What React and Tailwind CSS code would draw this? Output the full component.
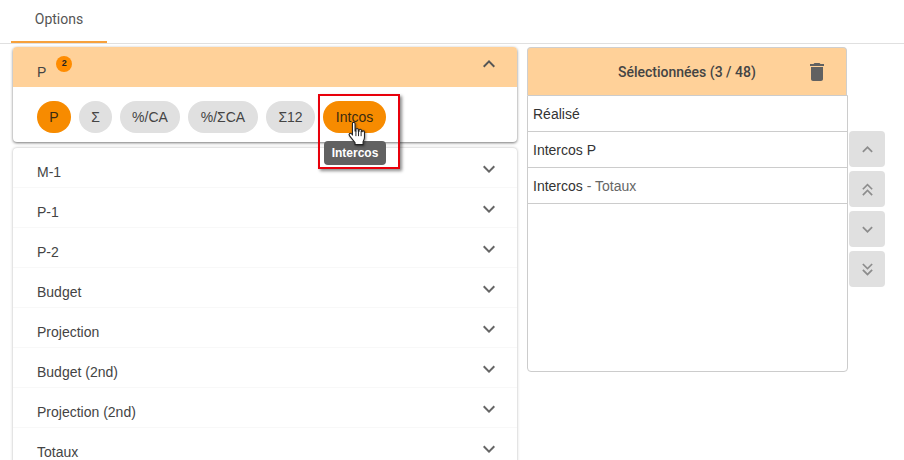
import React from "react";
import { MdDelete, MdExpandLess, MdExpandMore, MdKeyboardArrowUp, MdKeyboardArrowDown, MdKeyboardDoubleArrowUp, MdKeyboardDoubleArrowDown } from "react-icons/md";

const chips = [
  { label: "P", on: true, w: "w-[34px]" },
  { label: "Σ", w: "w-[33px]" },
  { label: "%/CA", w: "w-[60px]" },
  { label: "%/ΣCA", w: "w-[70px]" },
  { label: "Σ12", w: "w-[49px]" },
  { label: "Intcos", on: true, w: "w-[63px]" },
];

const rows = ["M-1", "P-1", "P-2", "Budget", "Projection", "Budget (2nd)", "Projection (2nd)", "Totaux"];

const Row = ({ label }) => (
  <div className="flex h-10 shrink-0 items-center justify-between border-b border-[#f8f8f8] pl-6 pr-4">
    <span className="pt-[8px] text-sm text-[#444]">{label}</span>
    <MdExpandMore size={24} className="mt-[2px] text-[#666]" />
  </div>
);

const SideButton = ({ children }) => (
  <div className="flex size-9 items-center justify-center rounded bg-[#e0e0e0] text-[#8c8c8c]">
    {children}
  </div>
);

const Hand = () => (
  <svg width="20" height="26" viewBox="0 0 18 24" className="absolute left-[347px] top-[121px] drop-shadow-[1px_1px_1px_rgba(0,0,0,0.4)]">
    <path
      d="M5 1.5c1 -.6 2.2 0 2.2 1.2v6.5l.8 0v-1.2c0-1.4 2.1-1.4 2.2 0v1.3l.7.1v-.8c0-1.4 2.1-1.4 2.2 0v1.2l.6.1c.2-1.2 2.2-1 2.2.4v4.7c0 2-.8 3.2-1.3 4.2v2.6H7.2v-1.8L2 13.5c-1-1.2.6-2.8 1.8-1.8l1 1V2.7c0-.5 0-1 .2-1.2z"
      fill="#fff"
      stroke="#222"
      strokeWidth="1"
    />
    <path d="M8 9v5M10.4 9v5M12.8 9.5V14" stroke="#222" strokeWidth=".9" fill="none" />
  </svg>
);

export default function App() {
  return (
    <div className="relative h-[460px] w-[904px] overflow-hidden bg-white font-['Liberation_Sans',Arial,sans-serif] text-sm text-[#333]">
      {/* tabs */}
      <div className="h-11 border-b border-[#e0e0e0] pl-[11px]">
        <div className="flex h-[43px] w-24 items-start justify-center border-b-2 border-[#f7a13c] pt-[9px] font-['Roboto',sans-serif] text-sm text-[#555]">
          Options
        </div>
      </div>

      <div className="flex h-[416px] items-start pl-[13px] pt-[3px]">
        {/* left accordion */}
        <div className="flex h-[413px] w-[504px] shrink-0 flex-col gap-[6px]">
          <div className="h-[95px] shrink-0 rounded bg-white shadow-[0_1px_3px_rgba(0,0,0,0.55)]">
            <div className="flex h-10 items-center justify-between rounded-t bg-[#ffd199] pl-6 pr-4">
              <div className="flex items-start">
                <span className="mt-[9px] text-sm text-[#444]">P</span>
                <span className="ml-[10px] mt-[3px] flex size-4 items-center justify-center rounded-full bg-[#ff8c00] text-[9px] font-bold text-[#222]">
                  2
                </span>
              </div>
              <MdExpandLess size={24} className="-mt-[6px] text-[#555]" />
            </div>
            <div className="flex gap-2 pl-6 pt-[14px]">
              {chips.map((c) => (
                <div
                  key={c.label}
                  className={`flex h-8 items-center justify-center rounded-full text-sm ${c.w} ${c.on ? "bg-[#f78b00] text-[#3a2a10]" : "bg-[#e0e0e0] text-[#444]"}`}
                >
                  {c.label}
                </div>
              ))}
            </div>
          </div>
          <div className="flex flex-col rounded-t bg-white shadow-[0_0_3px_rgba(0,0,0,0.3)]">
            {rows.map((r) => (
              <Row key={r} label={r} />
            ))}
          </div>
        </div>

        {/* selected list */}
        <div className="ml-[10px] flex w-[321px] shrink-0 flex-col">
          <div className="flex h-[48px] w-[320px] items-center justify-between rounded-t border border-b-0 border-[#cfcfcf] bg-[#ffd199] pl-[90px] pr-[17px]">
            <span className="font-['Roboto',sans-serif] text-sm font-medium text-[#444]">Sélectionnées (3 / 48)</span>
            <MdDelete size={24} className="text-[#616161]" />
          </div>
          <div className="h-[277px] rounded-b border border-[#cccccc]">
            <div className="flex h-9 items-center border-b border-[#cccccc] px-[5px] text-sm text-[#333]">Réalisé</div>
            <div className="flex h-9 items-center border-b border-[#cccccc] px-[5px] text-sm text-[#333]">Intercos P</div>
            <div className="flex h-9 items-center border-b border-[#cccccc] px-[5px] text-sm text-[#333]">
              Intercos<span className="whitespace-pre text-[#666]"> - Totaux</span>
            </div>
          </div>
        </div>

        {/* move buttons */}
        <div className="ml-[1px] mt-[84px] flex flex-col gap-1">
          <SideButton><MdKeyboardArrowUp size={21} /></SideButton>
          <SideButton><MdKeyboardDoubleArrowUp size={21} /></SideButton>
          <SideButton><MdKeyboardArrowDown size={21} /></SideButton>
          <SideButton><MdKeyboardDoubleArrowDown size={21} /></SideButton>
        </div>
      </div>

      {/* tooltip */}
      <div className="absolute left-[324px] top-[141px] flex h-6 w-[62px] items-center justify-center rounded bg-[#616161] text-xs font-bold text-white">
        Intercos
      </div>

      {/* red annotation box */}
      <div className="pointer-events-none absolute left-[318px] top-[94px] h-[75px] w-[82px] border-2 border-[#e8000b] shadow-[2px_2px_3px_rgba(0,0,0,0.45)]" />

      <Hand />
    </div>
  );
}
